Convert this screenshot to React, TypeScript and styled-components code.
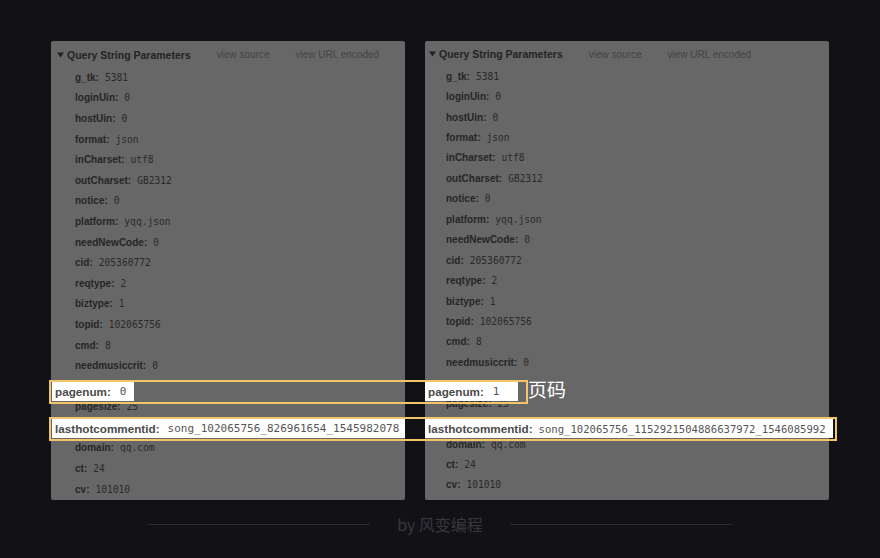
import React from "react";
import styled, { createGlobalStyle } from "styled-components";

const Global = createGlobalStyle`
  html, body { margin: 0; padding: 0; background: #121116; }
  body { font-family: "Liberation Sans", Arial, sans-serif; }
`;

const Stage = styled.div`
  position: relative;
  width: 880px;
  height: 558px;
  overflow: hidden;
  background: #121116;
  display: flex;
  flex-direction: column;
`;

const Panels = styled.div`
  display: flex;
  gap: 20px;
  padding: 41px 0 0 51px;
`;

const Panel = styled.div<{ $w: number }>`
  width: ${(p) => p.$w}px;
  height: 459px;
  background: #676767;
  border-radius: 2px;
  overflow: hidden;
  box-sizing: border-box;
`;

const Header = styled.div<{ $pad: number; $h: number }>`
  display: flex;
  align-items: center;
  height: ${(p) => p.$h}px;
  padding: 1px 0 0 ${(p) => p.$pad}px;
  box-sizing: border-box;
  gap: 26px;
`;

const Title = styled.div`
  display: flex;
  align-items: center;
  gap: 3px;
  font-weight: bold;
  font-size: 10.5px;
  color: #232323;
  white-space: nowrap;
`;

const HeadLink = styled.span`
  font-size: 10px;
  color: #444444;
  white-space: nowrap;
`;

const Rows = styled.div<{ $indent: number }>`
  display: flex;
  flex-direction: column;
  padding-left: ${(p) => p.$indent}px;
`;

const Row = styled.div<{ $h: number; $covered?: boolean }>`
  display: flex;
  align-items: center;
  gap: 6px;
  height: ${(p) => p.$h}px;
  white-space: nowrap;
  visibility: ${(p) => (p.$covered ? "hidden" : "visible")};
`;

const Key = styled.span`
  font-weight: bold;
  font-size: 10px;
  color: #262626;
`;

const Val = styled.span`
  font-family: "DejaVu Sans Mono", "Liberation Mono", monospace;
  font-size: 9.6px;
  color: #2a2a2a;
`;

const Callout = styled.div<{ $top: number; $left: number; $w: number }>`
  position: absolute;
  top: ${(p) => p.$top}px;
  left: ${(p) => p.$left}px;
  width: ${(p) => p.$w}px;
  height: 24px;
  border: 2px solid #f2c56a;
  box-sizing: border-box;
`;

const Chip = styled.div<{ $left: number; $w: number }>`
  position: absolute;
  top: 0;
  left: ${(p) => p.$left}px;
  width: ${(p) => p.$w}px;
  height: 19px;
  background: #ffffff;
  display: flex;
  align-items: center;
  padding-left: 3px;
  box-sizing: border-box;
  white-space: nowrap;
  overflow: hidden;
`;

const ChipKey = styled.span<{ $gap: number }>`
  font-weight: bold;
  font-size: 11.7px;
  color: #4b4b4b;
  margin-right: ${(p) => p.$gap}px;
`;

const ChipVal = styled.span<{ $size: number }>`
  font-family: "DejaVu Sans Mono", "Liberation Mono", monospace;
  font-size: ${(p) => p.$size}px;
  color: #555555;
`;

const Note = styled.div`
  position: absolute;
  top: 376px;
  left: 528px;
  font-family: "Noto Sans CJK SC", "Noto Sans", sans-serif;
  font-size: 19px;
  line-height: 26px;
  color: #ffffff;
`;

const Footer = styled.div`
  display: flex;
  align-items: center;
  justify-content: center;
  gap: 27px;
  margin-top: 14px;
  height: 20px;
`;

const Rule = styled.div`
  width: 222px;
  height: 1px;
  background: #2d2c31;
`;

const Credit = styled.span`
  font-family: "Noto Sans CJK SC", "Noto Sans", sans-serif;
  font-size: 16px;
  color: #38373d;
  white-space: nowrap;
`;

type Pair = [string, string];

const base = (pagenum: string, hot: string): Pair[] => [
  ["g_tk", "5381"],
  ["loginUin", "0"],
  ["hostUin", "0"],
  ["format", "json"],
  ["inCharset", "utf8"],
  ["outCharset", "GB2312"],
  ["notice", "0"],
  ["platform", "yqq.json"],
  ["needNewCode", "0"],
  ["cid", "205360772"],
  ["reqtype", "2"],
  ["biztype", "1"],
  ["topid", "102065756"],
  ["cmd", "8"],
  ["needmusiccrit", "0"],
  ["pagenum", pagenum],
  ["pagesize", "25"],
  ["lasthotcommentid", hot],
  ["domain", "qq.com"],
  ["ct", "24"],
  ["cv", "101010"],
];

const COVERED = new Set(["pagenum", "lasthotcommentid"]);

const HOT_L = "song_102065756_826961654_1545982078";
const HOT_R = "song_102065756_1152921504886637972_1546085992";

const Caret = () => (
  <svg width="7" height="6" viewBox="0 0 7 6">
    <path d="M0 0.5 L7 0.5 L3.5 5.5 Z" fill="#232323" />
  </svg>
);

const ParamPanel: React.FC<{
  w: number;
  pad: number;
  headH: number;
  indent: number;
  rowH: number;
  rows: Pair[];
}> = ({ w, pad, headH, indent, rowH, rows }) => (
  <Panel $w={w}>
    <Header $pad={pad} $h={headH}>
      <Title>
        <Caret />
        Query String Parameters
      </Title>
      <HeadLink>view source</HeadLink>
      <HeadLink>view URL encoded</HeadLink>
    </Header>
    <Rows $indent={indent}>
      {rows.map(([k, v]) => (
        <Row key={k} $h={rowH} $covered={COVERED.has(k)}>
          <Key>{k}:</Key>
          <Val>{v}</Val>
        </Row>
      ))}
    </Rows>
  </Panel>
);

export default function App() {
  return (
    <Stage>
      <Global />
      <Panels>
        <ParamPanel w={354} pad={6} headH={26} indent={24} rowH={20.6} rows={base("0", HOT_L)} />
        <ParamPanel w={404} pad={4} headH={25} indent={21} rowH={20.45} rows={base("1", HOT_R)} />
      </Panels>
      <Footer>
        <Rule />
        <Credit>by 风变编程</Credit>
        <Rule />
      </Footer>

      <Callout $top={380} $left={49} $w={479}>
        <Chip $left={1} $w={82}>
          <ChipKey $gap={9}>pagenum:</ChipKey>
          <ChipVal $size={11}>0</ChipVal>
        </Chip>
        <Chip $left={374} $w={93}>
          <ChipKey $gap={9}>pagenum:</ChipKey>
          <ChipVal $size={11}>1</ChipVal>
        </Chip>
      </Callout>
      <Note>页码</Note>

      <Callout $top={417} $left={49} $w={788}>
        <Chip $left={1} $w={353}>
          <ChipKey $gap={8}>lasthotcommentid:</ChipKey>
          <ChipVal $size={11}>{HOT_L}</ChipVal>
        </Chip>
        <Chip $left={374} $w={408}>
          <ChipKey $gap={6}>lasthotcommentid:</ChipKey>
          <ChipVal $size={10.6}>{HOT_R}</ChipVal>
        </Chip>
      </Callout>
    </Stage>
  );
}
